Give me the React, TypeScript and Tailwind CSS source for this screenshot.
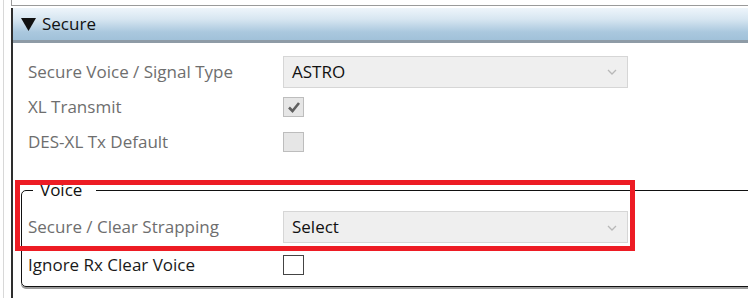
import type { ReactNode } from 'react';

const FONT = "font-['Open_Sans','Noto_Sans',sans-serif]";

function Dropdown({ value }: { value: string }) {
  return (
    <div className="flex items-center justify-between w-[345px] h-[32px] bg-[#efefef] border border-[#d6d6d6] pl-[8px] pr-[10px]">
      <span className="text-[17px] text-[#111]">{value}</span>
      <svg width="10" height="6" viewBox="0 0 10 6" className="mt-[1px]">
        <polyline points="1,1 5,5 9,1" fill="none" stroke="#b8b8b8" strokeWidth="1.3" />
      </svg>
    </div>
  );
}

function CheckBox({ checked, disabled }: { checked?: boolean; disabled?: boolean }) {
  return (
    <div
      className={`flex items-center justify-center w-[21px] h-[20px] border ${
        disabled ? 'bg-[#e6e6e6] border-[#bdbdbd]' : 'bg-white border-[#444]'
      }`}
    >
      {checked && (
        <svg width="14" height="12" viewBox="0 0 14 12">
          <polyline points="2,6.5 5.5,10 12,2" fill="none" stroke="#606060" strokeWidth="2.6" />
        </svg>
      )}
    </div>
  );
}

function Row({ label, muted, h, children }: { label: string; muted?: boolean; h: string; children: ReactNode }) {
  return (
    <div className={`grid grid-cols-[255px_1fr] items-center ${h}`}>
      <span className={`text-[17px] ${muted ? 'text-[#6e6e6e]' : 'text-[#1a1a1a]'}`}>{label}</span>
      <div className="flex items-center">{children}</div>
    </div>
  );
}

export default function App() {
  return (
    <div className={`relative w-[748px] h-[298px] overflow-hidden bg-white ${FONT}`}>
      <div className="flex h-full w-[820px]">
        <div className="w-[3px]" />
        <div className="w-px bg-[#d8d8d8]" />
        <div className="w-[7px]" />
        <div className="flex-1 flex flex-col">
          <div className="h-[6px] border-l border-b border-[#9a9a9a]" />
          <div className="h-[2px]" />
          <div className="flex-1 border-l-2 border-[#2e2e2e] flex flex-col">
            <div className="flex items-center gap-[6px] h-[35px] pl-[8px] bg-[linear-gradient(to_bottom,#eef5fb,#d7e6f1_35%,#aac8de_75%,#a1c1d9)] border-b-[3px] border-[#8e9ba6]">
              <svg width="15" height="14" viewBox="0 0 15 14">
                <polygon points="0,1 15,1 7.5,14" fill="#111" />
              </svg>
              <span className="text-[17px] text-[#111]">Secure</span>
            </div>

            <div className="flex flex-col pl-[15px] pt-[11px]">
              <Row label="Secure Voice / Signal Type" muted h="h-[35px]">
                <Dropdown value="ASTRO" />
              </Row>
              <Row label="XL Transmit" muted h="h-[35px]">
                <CheckBox checked disabled />
              </Row>
              <Row label="DES-XL Tx Default" muted h="h-[35px]">
                <CheckBox disabled />
              </Row>
            </div>

            <fieldset className="ml-[8px] mt-[20px] border border-[#111] rounded-[5px] pl-[6px] pb-[2px] shadow-[0_2px_0_#9a9a9a]">
              <legend className="ml-[5px] pl-[7px] pr-[14px] text-[17px] leading-[22px] text-[#111]">Voice</legend>
              <div className="pt-[8px]">
                <Row label="Secure / Clear Strapping" muted h="h-[36px]">
                  <Dropdown value="Select" />
                </Row>
                <Row label="Ignore Rx Clear Voice" h="h-[39px]">
                  <CheckBox />
                </Row>
              </div>
            </fieldset>
          </div>
        </div>
      </div>

      {/* annotation box */}
      <div className="absolute left-[15px] top-[180px] w-[620px] h-[71px] border-[5px] border-[#ed1c24] pointer-events-none" />
    </div>
  );
}
